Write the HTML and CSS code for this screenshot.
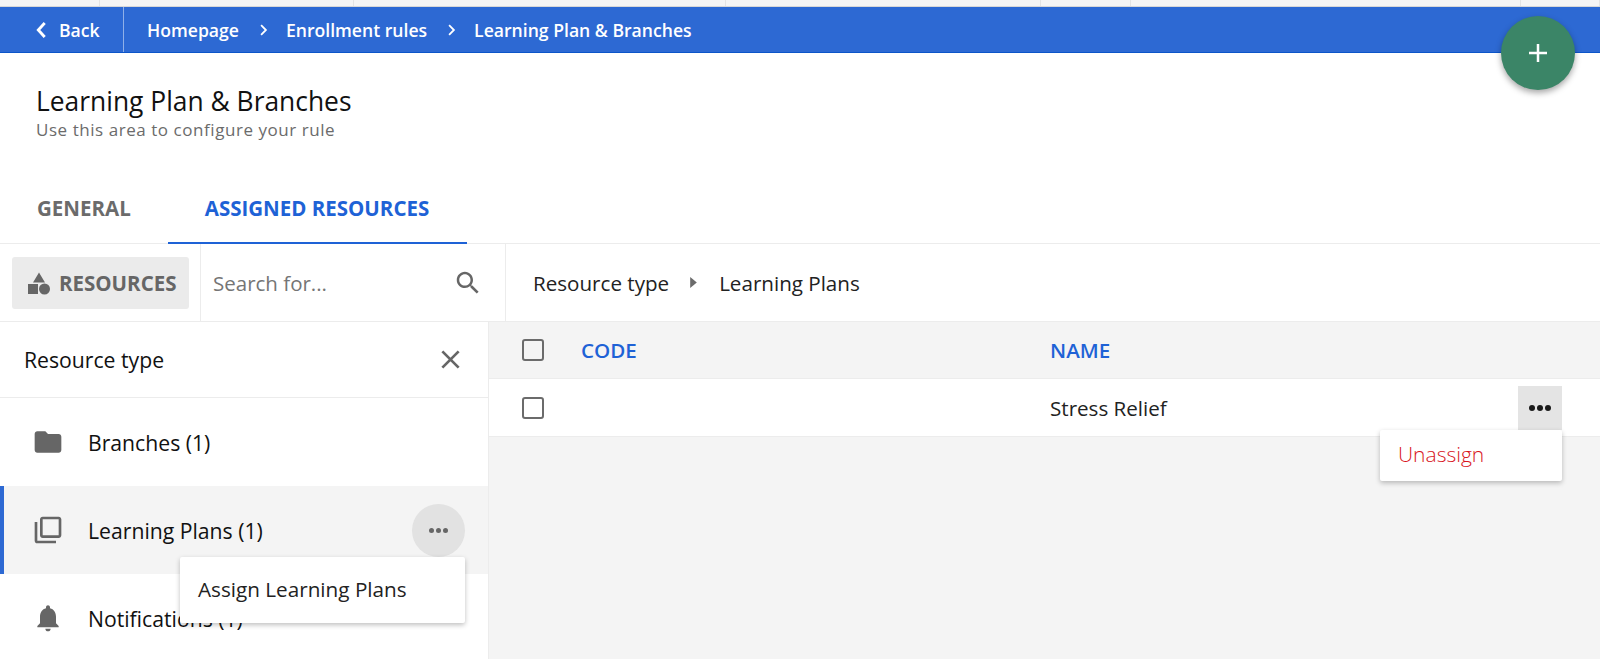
FILE: index.html
```html
<!DOCTYPE html>
<html lang="en">
<head>
    <meta charset="UTF-8">
    <title>Learning Plan &amp; Branches</title>
    <link rel="stylesheet" href="styles.css">
</head>
<body>
    <div class="page">
        <div class="strip">
            <span></span><span></span><span></span><span></span><span></span><span></span><span></span>
        </div>

        <div class="topbar">
            <a class="back">
                <svg class="back-icon" viewBox="0 0 8 14"><path d="M6.5 1.5 1.5 7l5 5.5"/></svg>
                Back
            </a>
            <div class="crumbs">
                <span>Homepage</span>
                <svg class="crumb-icon" viewBox="0 0 6 10"><path d="M1 1l4 4-4 4"/></svg>
                <span>Enrollment rules</span>
                <svg class="crumb-icon" viewBox="0 0 6 10"><path d="M1 1l4 4-4 4"/></svg>
                <span>Learning Plan &amp; Branches</span>
            </div>
        </div>

        <button class="fab">
            <svg viewBox="0 0 20 20"><path d="M10 1v18M1 10h18"/></svg>
        </button>

        <div class="page-head">
            <h1>Learning Plan &amp; Branches</h1>
            <p>Use this area to configure your rule</p>
        </div>

        <div class="tabs">
            <div class="tab">GENERAL</div>
            <div class="tab active">ASSIGNED RESOURCES</div>
        </div>

        <div class="toolbar">
            <div class="toolbar-left">
                <div class="resources-btn">
                    <svg viewBox="0 0 24 24"><path d="M12 1.500 18 11.500H6zM1 13h10v10H1z"/><circle cx="17.500" cy="18" r="5.500"/></svg>
                    RESOURCES
                </div>
            </div>
            <div class="search">
                <span>Search for...</span>
                <svg viewBox="0 0 24 24"><path d="M15.500 14h-.79l-.28-.27C15.410 12.590 16 11.110 16 9.500 16 5.910 13.090 3 9.500 3S3 5.910 3 9.500 5.910 16 9.500 16c1.610 0 3.090-.59 4.230-1.570l.27.28v.79l5 4.990L20.490 19l-4.990-5zm-6 0C7.010 14 5 11.990 5 9.500S7.010 5 9.500 5 14 7.010 14 9.500 11.990 14 9.500 14z"/></svg>
            </div>
            <div class="path">
                <span>Resource type</span>
                <svg viewBox="0 0 6 10"><path d="M0 0l6 5-6 5z"/></svg>
                <span>Learning Plans</span>
            </div>
        </div>

        <div class="main">
            <div class="side">
                <div class="side-head">
                    <span>Resource type</span>
                    <svg viewBox="0 0 14 14"><path d="M1 1l12 12M13 1L1 13"/></svg>
                </div>
                <div class="side-item">
                    <svg viewBox="0 0 24 24"><path d="M10 4H4c-1.100 0-2 .9-2 2v12c0 1.100.9 2 2 2h16c1.100 0 2-.9 2-2V8c0-1.100-.9-2-2-2h-8l-2-2z"/></svg>
                    <span>Branches (1)</span>
                </div>
                <div class="side-item selected">
                    <svg viewBox="0 0 24 24"><path d="M4 6H2v14c0 1.100.9 2 2 2h14v-2H4V6zm16-4H8c-1.100 0-2 .9-2 2v12c0 1.100.9 2 2 2h12c1.100 0 2-.9 2-2V4c0-1.100-.9-2-2-2zm0 14H8V4h12v12z"/></svg>
                    <span>Learning Plans (1)</span>
                    <div class="round-btn"><i></i><i></i><i></i></div>
                    <div class="menu assign-menu">Assign Learning Plans</div>
                </div>
                <div class="side-item">
                    <svg viewBox="0 0 24 24"><path d="M12 22c1.100 0 2-.9 2-2h-4c0 1.100.89 2 2 2zm6-6v-5c0-3.070-1.640-5.640-4.500-6.320V4c0-.83-.67-1.500-1.500-1.500s-1.500.67-1.500 1.500v.68C7.630 5.360 6 7.920 6 11v5l-2 2v1h16v-1l-2-2z"/></svg>
                    <span>Notifications (1)</span>
                </div>
            </div>

            <div class="table">
                <div class="row head">
                    <div class="check"></div>
                    <div class="col-code">CODE</div>
                    <div class="col-name">NAME</div>
                </div>
                <div class="row">
                    <div class="check"></div>
                    <div class="col-code"></div>
                    <div class="col-name">Stress Relief</div>
                    <div class="square-btn"><i></i><i></i><i></i></div>
                    <div class="menu unassign-menu">Unassign</div>
                </div>
            </div>
        </div>
    </div>
</body>
</html>
```

FILE: styles.css
```css
* {
    margin: 0;
    padding: 0;
    box-sizing: border-box;
}

body {
    font-family: "Open Sans", sans-serif;
    background: white;
    color: #1a1a1a;
}

svg {
    display: block;
    flex-shrink: 0;
}

.page {
    position: relative;
    display: flex;
    flex-direction: column;
    width: 1600px;
    height: 659px;
    overflow: hidden;
}

.strip {
    display: grid;
    grid-template-columns: 100px 254px 372px 315px 90px 390px 79px;
    flex: none;
    height: 7px;
    background: #f5f5f5;
    border-bottom: 1px solid #d8d8d8;
}

.strip span {
    border-right: 1px solid #e4e4e4;
}

.topbar {
    display: flex;
    flex: none;
    align-items: center;
    height: 46px;
    background: #2d69d3;
    border-bottom: 1px solid #0c55c9;
    color: white;
    font-size: 17.6px;
    font-weight: 600;
}

.back {
    display: flex;
    align-items: center;
    gap: 11px;
    width: 124px;
    height: 100%;
    padding-left: 35px;
    border-right: 1px solid #8fb0e8;
}

.back-icon {
    width: 13px;
    height: 18px;
    fill: none;
    stroke: white;
    stroke-width: 2.2;
}

.crumbs {
    display: flex;
    align-items: center;
    padding-left: 23px;
}

.crumb-icon {
    width: 9px;
    height: 12px;
    margin: 0 18px 0 20px;
    fill: none;
    stroke: white;
    stroke-width: 1.500;
}

.fab {
    position: absolute;
    top: 16px;
    left: 1501px;
    display: flex;
    align-items: center;
    justify-content: center;
    width: 74px;
    height: 74px;
    border: none;
    border-radius: 50%;
    background: #3b8567;
    box-shadow: 0 3px 6px rgba(0, 0, 0, 0.35);
}

.fab svg {
    width: 20px;
    height: 20px;
    fill: none;
    stroke: white;
    stroke-width: 2.500;
}

.page-head {
    flex: none;
    height: 126px;
    padding: 30px 0 0 36px;
}

.page-head h1 {
    font-size: 26.4px;
    font-weight: 400;
    line-height: 36px;
    color: #111;
}

.page-head p {
    font-size: 17px;
    letter-spacing: 0.55px;
    line-height: 22px;
    color: #6b6b6b;
}

.tabs {
    display: flex;
    flex: none;
    height: 65px;
    padding-left: 37px;
    border-bottom: 1px solid #ececec;
    font-size: 20.5px;
    font-weight: 700;
    color: #6b6b6b;
}

.tab {
    padding-top: 15px;
}

.tab.active {
    width: 299px;
    margin-left: 37px;
    margin-bottom: -1px;
    padding-left: 37px;
    border-bottom: 2px solid #1e62d6;
    color: #1e62d6;
}

.toolbar {
    display: flex;
    flex: none;
    height: 78px;
    border-bottom: 1px solid #ececec;
}

.toolbar-left {
    display: flex;
    align-items: center;
    width: 201px;
    padding-left: 12px;
    border-right: 1px solid #ececec;
}

.resources-btn {
    display: flex;
    align-items: center;
    gap: 8px;
    width: 177px;
    height: 52px;
    padding-left: 15px;
    border-radius: 3px;
    background: #ebebeb;
    font-size: 20.5px;
    font-weight: 700;
    color: #666;
}

.resources-btn svg {
    width: 24px;
    height: 24px;
    fill: #666;
}

.search {
    display: flex;
    align-items: center;
    justify-content: space-between;
    width: 305px;
    padding: 0 22px 0 12px;
    border-right: 1px solid #ececec;
    font-size: 20.5px;
    color: #757575;
}

.search svg {
    width: 30px;
    height: 30px;
    fill: #666;
}

.path {
    display: flex;
    align-items: center;
    padding-left: 27px;
    font-size: 20.6px;
    color: #222;
}

.path svg {
    width: 7px;
    height: 11px;
    margin: 0 22px 0 21px;
    fill: #6b6b6b;
}

.main {
    display: flex;
    flex: 1;
}

.side {
    width: 489px;
    border-right: 1px solid #ececec;
}

.side-head {
    display: flex;
    align-items: center;
    justify-content: space-between;
    height: 76px;
    padding: 0 28px 0 24px;
    border-bottom: 1px solid #ececec;
    font-size: 21.2px;
    color: #111;
}

.side-head svg {
    width: 19px;
    height: 19px;
    fill: none;
    stroke: #666;
    stroke-width: 2;
}

.side-item {
    position: relative;
    display: flex;
    align-items: center;
    gap: 24px;
    height: 88px;
    padding-left: 32px;
    font-size: 21.2px;
    color: #111;
}

.side-item svg {
    width: 32px;
    height: 32px;
    fill: #666;
}

.side-item.selected {
    background: #f4f4f4;
    border-left: 4px solid #2d69d3;
    padding-left: 28px;
}

.round-btn {
    position: absolute;
    top: 18px;
    left: 408px;
    display: flex;
    align-items: center;
    justify-content: center;
    gap: 2px;
    width: 53px;
    height: 53px;
    border-radius: 50%;
    background: #e2e2e2;
}

.round-btn i,
.square-btn i {
    display: block;
    width: 5px;
    height: 5px;
    border-radius: 50%;
    background: #666;
}

.square-btn i {
    width: 6px;
    height: 6px;
    background: #1a1a1a;
}

.menu {
    position: absolute;
    z-index: 2;
    background: white;
    border-radius: 2px;
    box-shadow: 0 2px 5px rgba(0, 0, 0, 0.25);
    color: #222;
    font-size: 20.7px;
}

.assign-menu {
    top: 71px;
    left: 176px;
    width: 285px;
    height: 66px;
    padding: 18px 0 0 18px;
}

.table {
    flex: 1;
    background: #f4f4f4;
}

.row {
    position: relative;
    display: flex;
    align-items: center;
    height: 58px;
    padding-left: 33px;
    background: white;
    border-bottom: 1px solid #ececec;
    font-size: 20.6px;
    color: #222;
}

.row.head {
    height: 57px;
    background: #f4f4f4;
    font-weight: 600;
    color: #1e62d6;
}

.check {
    width: 22px;
    height: 22px;
    border: 2px solid #6b6b6b;
    border-radius: 3px;
    background: white;
}

.row.head .check {
    background: transparent;
}

.col-code {
    width: 469px;
    margin-left: 37px;
}

.square-btn {
    position: absolute;
    top: 7px;
    left: 1029px;
    display: flex;
    align-items: center;
    justify-content: center;
    gap: 2px;
    width: 44px;
    height: 44px;
    background: #e4e4e4;
}

.unassign-menu {
    top: 51px;
    left: 891px;
    width: 182px;
    height: 51px;
    padding: 10px 0 0 18px;
    font-size: 21px;
    font-weight: 300;
    color: #d8141c;
}
```
